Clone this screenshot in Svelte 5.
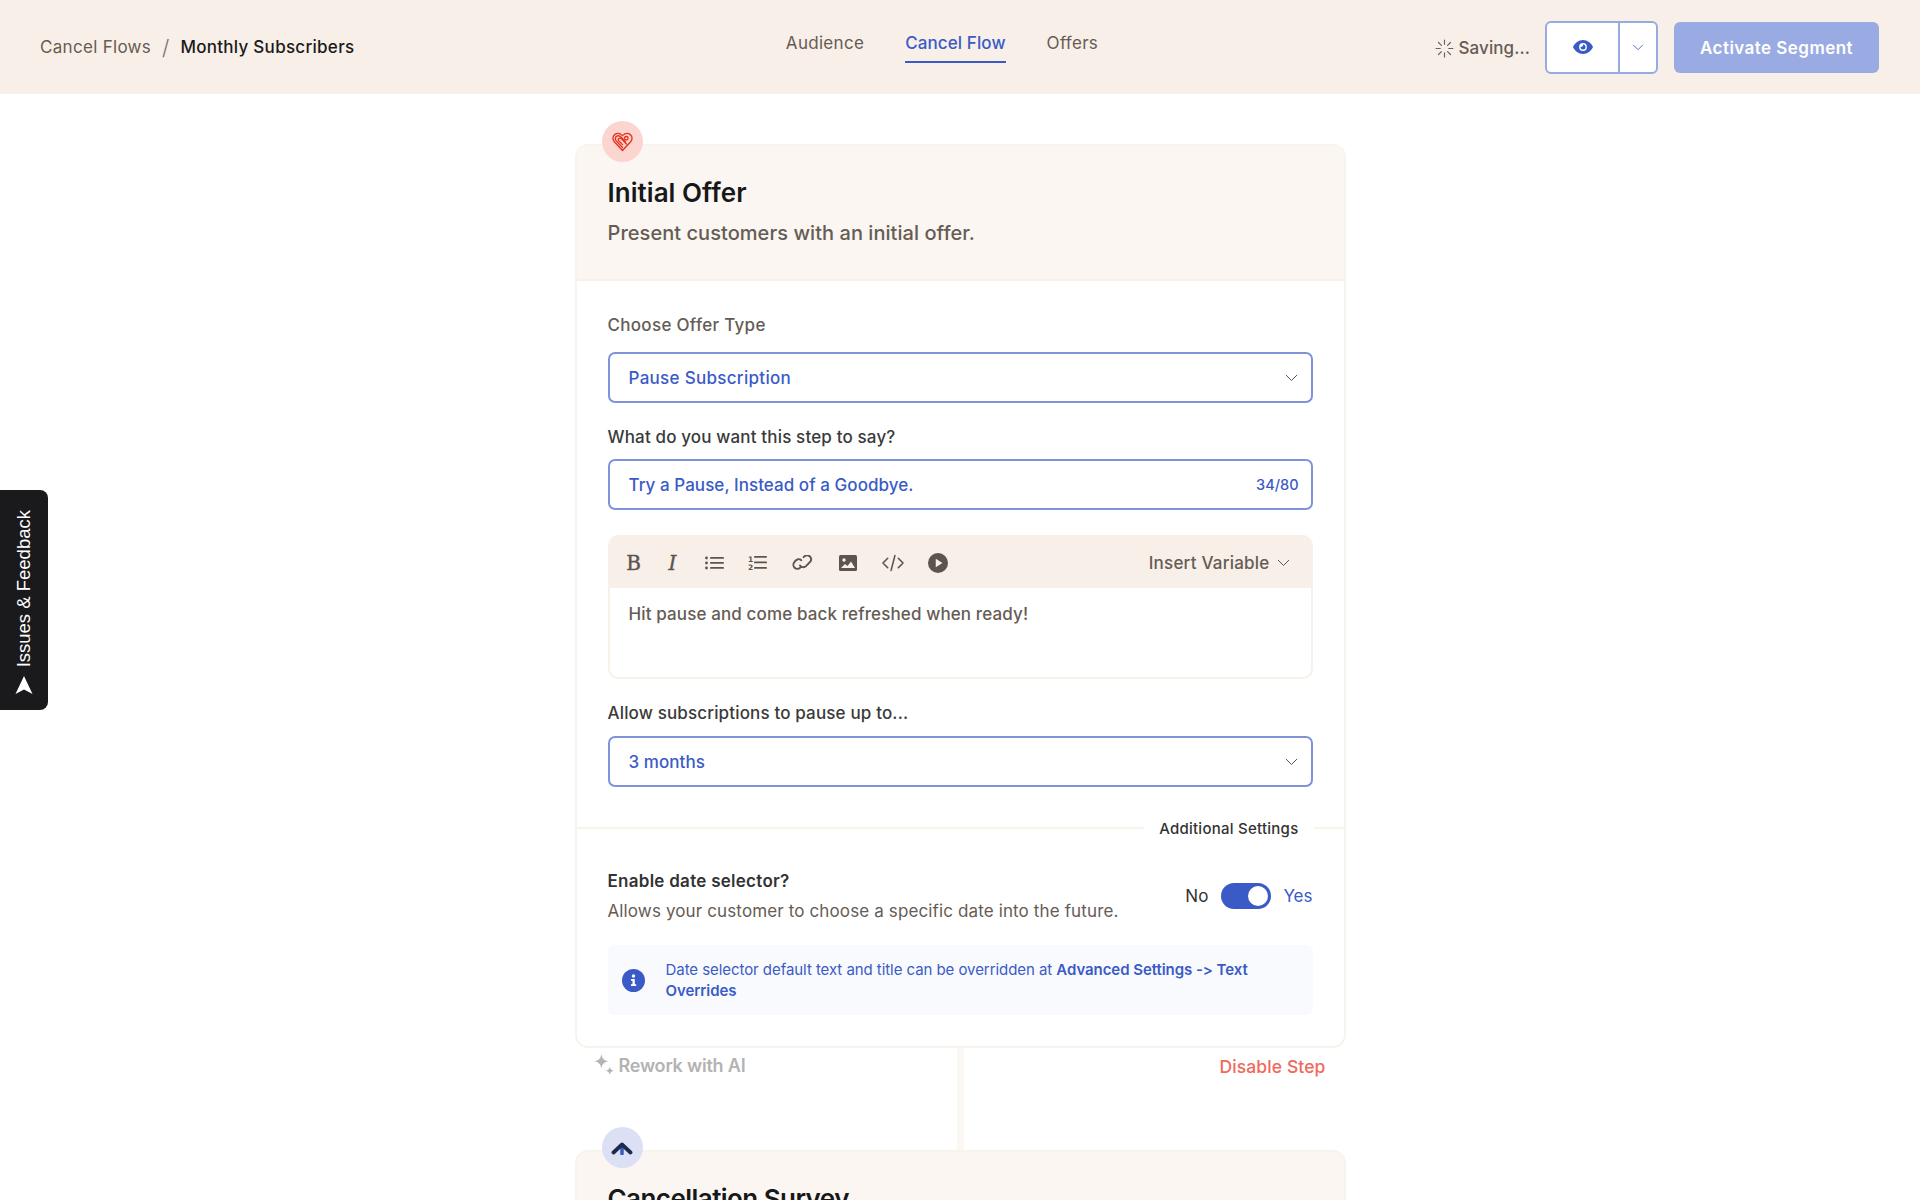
<script>
  const chev = 'M1 1l5.500 5.500L12 1';
</script>

<div class="page">
  <header class="topbar">
    <nav class="crumbs">
      <span class="crumb-muted">Cancel Flows</span>
      <span class="slash">/</span>
      <span class="crumb-current">Monthly Subscribers</span>
    </nav>
    <nav class="tabs">
      <span class="tab">Audience</span>
      <span class="tab active">Cancel Flow</span>
      <span class="tab">Offers</span>
    </nav>
    <div class="actions">
      <span class="saving">
        <svg width="19" height="19" viewBox="0 0 18 18" fill="none" stroke="#6b625b" stroke-width="1.100" stroke-linecap="round">
          <path d="M9 1v4M9 13v4M1 9h4M13 9h4M3.300 3.300l2.800 2.800M11.900 11.900l2.800 2.800M3.300 14.700l2.800-2.800M11.900 6.100l2.800-2.800"/>
        </svg>
        Saving...
      </span>
      <div class="preview">
        <span class="eye">
          <svg width="20" height="14" viewBox="0 0 20 14">
            <path fill="#3a5bc7" d="M10 0C5.500 0 1.900 3 0 7c1.900 4 5.500 7 10 7s8.100-3 10-7c-1.900-4-5.500-7-10-7z"/>
            <circle cx="10" cy="7" r="3.900" fill="#fff"/>
            <path fill="#3a5bc7" d="M10 4.500a2.500 2.500 0 1 1-2.500 2.500c1.300.4 2.900-.9 2.500-2.500z"/>
          </svg>
        </span>
        <span class="drop">
          <svg width="12" height="7" viewBox="0 0 13 8" fill="none" stroke="#3a5bc7" stroke-width="1"><path d={chev}/></svg>
        </span>
      </div>
      <span class="activate">Activate Segment</span>
    </div>
  </header>

  <aside class="feedback">
    <span class="fb-text">Issues &amp; Feedback</span>
    <svg class="fb-icon" width="18" height="18" viewBox="0 0 17 18"><path fill="#fff" d="M8.500 0L17 18l-8.500-4.500L0 18z"/></svg>
  </aside>

  <main class="flow">
    <section class="card">
      <span class="badge badge-red">
        <svg width="21" height="21" viewBox="0 0 20 20" fill="none" stroke="#e8321f" stroke-width="1.300" stroke-linejoin="round" stroke-linecap="round">
          <path d="M10 18.500L2.200 10.200C.2 8 .6 4.700 2.800 3.200 5 1.800 7.700 2.200 10 4.400c2.300-2.200 5-2.600 7.200-1.200 2.200 1.500 2.600 4.800.6 7z"/>
          <path d="M10 15.800L4 9.400C2.700 8 3 5.800 4.500 4.900c1.500-.9 3-.3 4.300 1l4 4.200"/>
          <path d="M10 13l-3.600-3.800C5.500 8.200 6 7 7 6.700c.9-.3 1.500.3 2.200 1l4.600 4.700"/>
          <circle cx="13.600" cy="6.900" r="1.700"/>
        </svg>
      </span>
      <div class="card-head">
        <h2>Initial Offer</h2>
        <p>Present customers with an initial offer.</p>
      </div>
      <div class="card-body">
        <div class="label first">Choose Offer Type</div>
        <div class="field">
          <span class="sp-a">Pause Subscription</span>
          <svg width="13" height="8" viewBox="0 0 13 8" fill="none" stroke="#5c544e" stroke-width="1"><path d={chev}/></svg>
        </div>
        <div class="label dark">What do you want this step to say?</div>
        <div class="field">
          <span>Try a Pause, Instead of a Goodbye.</span>
          <span class="count">34/80</span>
        </div>
        <div class="editor">
          <div class="toolbar">
            <div class="tools">
              <span class="bold-i">B</span>
              <span class="ital-i">I</span>
              <svg width="19" height="14" viewBox="0 0 19 14" fill="#5c544e"><circle cx="1.500" cy="2" r="1.400"/><circle cx="1.500" cy="7" r="1.400"/><circle cx="1.500" cy="12" r="1.400"/><rect x="5" y="1" width="14" height="1.800" rx=".9"/><rect x="5" y="6" width="14" height="1.800" rx=".9"/><rect x="5" y="11" width="14" height="1.800" rx=".9"/></svg>
              <svg width="19" height="15" viewBox="0 0 19 15"><text x="0" y="6.500" class="num">1</text><text x="0" y="14.500" class="num">2</text><g fill="#5c544e"><rect x="6" y="1" width="13" height="1.800" rx=".9"/><rect x="6" y="6.500" width="13" height="1.800" rx=".9"/><rect x="6" y="12" width="13" height="1.800" rx=".9"/></g></svg>
              <svg width="22" height="16" viewBox="0 0 22 16" fill="none" stroke="#5c544e" stroke-width="1.900" stroke-linecap="round"><path d="M9.300 5.200A4 4 0 0 0 3.300 5.900L2.400 7.200a4 4 0 0 0 5.700 5.600l1-1"/><path d="M8 10.500a4 4 0 0 0 6 .6l4.300-4.400a4 4 0 0 0-5.700-5.500l-1 1"/></svg>
              <svg width="18" height="16" viewBox="0 0 18 16"><rect width="18" height="16" rx="1.500" fill="#5c544e"/><circle cx="5" cy="5" r="1.700" fill="#f8efe8"/><path fill="#f8efe8" d="M2 13l4-4 2.500 2 3.500-4.500 4 6.500z"/></svg>
              <svg width="24" height="18" viewBox="0 0 22 17" fill="none" stroke="#5c544e" stroke-width="1.500" stroke-linecap="round" stroke-linejoin="round"><path d="M6 4L1.500 8.500 6 13M16 4l4.500 4.500L16 13M12.800 1.500L9.200 15.500"/></svg>
              <svg width="20" height="20" viewBox="0 0 18 18"><circle cx="9" cy="9" r="9" fill="#5c544e"/><path d="M7 5.200v7.600L13 9z" fill="#f8efe8"/></svg>
            </div>
            <div class="insert">
              Insert Variable
              <svg width="13" height="8" viewBox="0 0 13 8" fill="none" stroke="#5c544e" stroke-width="1"><path d={chev}/></svg>
            </div>
          </div>
          <div class="editor-body">Hit pause and come back refreshed when ready!</div>
        </div>
        <div class="label dark after-editor">Allow subscriptions to pause up to...</div>
        <div class="field">
          <span>3 months</span>
          <svg width="13" height="8" viewBox="0 0 13 8" fill="none" stroke="#5c544e" stroke-width="1"><path d={chev}/></svg>
        </div>
      </div>
      <div class="divider"><span>Additional Settings</span></div>
      <div class="settings">
        <div class="setting-row">
          <div>
            <div class="setting-title">Enable date selector?</div>
            <div class="setting-desc">Allows your customer to choose a specific date into the future.</div>
          </div>
          <div class="toggle-wrap">
            <span class="no">No</span>
            <span class="toggle"><span class="knob"></span></span>
            <span class="yes">Yes</span>
          </div>
        </div>
        <div class="info">
          <svg width="23" height="23" viewBox="0 0 23 23"><circle cx="11.500" cy="11.500" r="11.500" fill="#3a5bc7"/><circle cx="11.500" cy="7" r="1.700" fill="#fff"/><path fill="#fff" d="M9 10h3.800v5.300H14.200V17H9v-1.700h1.500v-3.600H9z"/></svg>
          <p>Date selector default text and title can be overridden at <b>Advanced Settings -&gt; Text Overrides</b></p>
        </div>
      </div>
    </section>

    <div class="between">
      <span class="rework">
        <svg width="22" height="22" viewBox="0 0 21 21" fill="#b5b5b5"><path d="M8 0c.7 4.400 2.600 6.300 7 7-4.400.7-6.300 2.600-7 7-.7-4.400-2.600-6.300-7-7 4.400-.7 6.300-2.600 7-7z"/><path d="M16 12c.4 2.400 1.600 3.600 4 4-2.400.4-3.600 1.600-4 4-.4-2.400-1.600-3.600-4-4 2.400-.4 3.600-1.600 4-4z"/></svg>
        Rework with AI
      </span>
      <span class="disable">Disable Step</span>
    </div>

    <section class="card second">
      <span class="badge badge-blue">
        <svg width="22" height="14" viewBox="0 0 22 14" fill="none"><path d="M11 7v6" stroke="#3a5bc7" stroke-width="3.500" stroke-linecap="round"/><path d="M2.500 11.500L11 3.500l8.500 8" stroke="#1e2a4a" stroke-width="3.800" stroke-linecap="round" stroke-linejoin="round"/></svg>
      </span>
      <div class="card-head">
        <h2 class="survey">Cancellation Survey</h2>
      </div>
    </section>
  </main>
</div>

<style>
  :global(body) {
    margin: 0;
    background: #fff;
    overflow: hidden;
    font-family: Inter, "Liberation Sans", sans-serif;
    color: #1a1a1a;
  }
  .page { height: 1200px; overflow: hidden; position: relative; }

  .topbar {
    height: 94px;
    background: #f8efe8;
    display: grid;
    grid-template-columns: 1fr auto 1fr;
    align-items: center;
    padding: 0 41px 0 40px;
  }
  .crumbs { display: flex; align-items: center; font-size: 17px; }
  .crumb-muted { color: #655c55; letter-spacing: 0.3px; }
  .slash { color: #75706a; margin: 0 11px; font-size: 21px; font-weight: 300; }
  .crumb-current { color: #1a1a1a; font-weight: 500; letter-spacing: 0.28px; }

  .tabs { display: flex; gap: 41px; margin: -4px 35px 0 0; font-size: 17px; letter-spacing: 0.3px; color: #655c55; }
  .tab { padding: 6px 0 8px; border-bottom: 2px solid transparent; }
  .tab.active { color: #3a5bc7; font-weight: 500; border-bottom-color: #3a5bc7; letter-spacing: 0.1px; }

  .actions { display: flex; align-items: center; justify-content: flex-end; }
  .saving { display: flex; align-items: center; gap: 4px; font-size: 17px; color: #655c55; font-weight: 500; letter-spacing: 0.1px; margin-right: 15px; padding-top: 2px; }
  .preview { display: flex; height: 53px; width: 113px; box-sizing: border-box; background: #fff; border: 2px solid #98a9e4; border-radius: 6px; margin-right: 16px; }
  .eye { flex: 1; display: flex; align-items: center; justify-content: center; border-right: 2px solid #98a9e4; }
  .drop { width: 36px; display: flex; align-items: center; justify-content: center; }
  .activate { width: 205px; height: 51px; padding-top: 2px; box-sizing: border-box; background: #9aabe3; border-radius: 6px; color: #fff; font-size: 17px; font-weight: 600; letter-spacing: 0.45px; display: flex; align-items: center; justify-content: center; }

  .feedback {
    position: absolute;
    left: 0;
    top: 490px;
    width: 48px;
    height: 220px;
    background: #1a1a1c;
    border-radius: 0 8px 8px 0;
    display: flex;
    flex-direction: column;
    align-items: center;
    justify-content: flex-end;
    padding-bottom: 16px;
    box-sizing: border-box;
    gap: 9px;
  }
  .fb-text { writing-mode: vertical-rl; transform: rotate(180deg); color: #fff; font-family: "Liberation Sans", sans-serif; font-size: 18.500px; }

  .flow {
    width: 771px;
    margin: 0 auto;
    padding-top: 50px;
    position: relative;
  }
  .flow::before {
    content: "";
    position: absolute;
    left: 382px;
    top: 900px;
    width: 7px;
    height: 210px;
    background: #fbf8f4;
  }

  .card {
    position: relative;
    background: #fff;
    border: 2px solid #f8f3ec;
    border-radius: 13px;
    box-sizing: border-box;
  }
  .second { background: #fbf6f1; }
  .badge {
    position: absolute;
    left: 25px;
    top: -25px;
    width: 41px;
    height: 41px;
    border-radius: 50%;
    display: flex;
    align-items: center;
    justify-content: center;
  }
  .badge-red { background: #fdd5d0; }
  .badge-blue { background: #dbe0f4; }

  .card-head {
    background: #fbf6f1;
    border-bottom: 2px solid #f8f1e9;
    border-radius: 11px 11px 0 0;
    height: 135px;
    padding: 30px 31px 0;
    box-sizing: border-box;
  }
  h2 { margin: 0; font-size: 26px; line-height: 34px; font-weight: 600; letter-spacing: 0.05px; color: #17181a; }
  h2.survey { letter-spacing: -0.55px; }
  p { margin: 0; }
  .card-head p { margin-top: 8px; font-size: 20px; line-height: 30px; color: #655c55; font-weight: 500; letter-spacing: 0.05px; }

  .card-body { padding: 0 31px; }
  .label { font-size: 17px; line-height: 24px; font-weight: 500; color: #655c55; letter-spacing: 0.15px; }
  .label.first { margin-top: 32px; margin-bottom: 15px; letter-spacing: 0.3px; }
  .label.dark { color: #3a3a3a; margin-top: 22px; margin-bottom: 10px; }
  .label.after-editor { margin-top: 22px; margin-bottom: 11px; }

  .field {
    height: 51px;
    box-sizing: border-box;
    border: 2px solid #7f93dc;
    border-radius: 7px;
    display: flex;
    align-items: center;
    justify-content: space-between;
    padding: 0 13px 0 19px;
    color: #3a5bc7;
    font-size: 17px;
    font-weight: 500;
    letter-spacing: 0.05px;
  }
  .sp-a { letter-spacing: 0.3px; }
  .count { font-size: 14.500px; letter-spacing: 0; margin-right: -1px; }

  .editor { margin-top: 25px; border: 2px solid #f8f1e9; border-top: 0; border-radius: 10px; overflow: hidden; }
  .toolbar {
    height: 53px;
    margin: 0 -2px;
    background: #f8efe8;
    display: flex;
    align-items: center;
    justify-content: space-between;
    padding: 2px 23px 0 19px;
    box-sizing: border-box;
  }
  .tools { display: grid; grid-template-columns: 14px 16px 20px 18px 24px 18px 24px 18px; column-gap: 24px; justify-items: center; align-items: center; }
  .bold-i { font-family: "DejaVu Serif", serif; color: #5c544e; font-size: 20px; -webkit-text-stroke: .4px #5c544e; }
  .ital-i { font-family: "DejaVu Serif", serif; font-style: italic; color: #5c544e; font-size: 20px; -webkit-text-stroke: .4px #5c544e; }
  .num { font-family: "DejaVu Sans", sans-serif; font-weight: 700; font-size: 7.500px; fill: #5c544e; }
  .insert { display: flex; align-items: center; gap: 7px; color: #655c55; font-size: 17px; font-weight: 500; letter-spacing: 0.22px; }
  .editor-body { height: 89px; padding: 14px 19px; box-sizing: border-box; font-size: 17px; line-height: 24px; color: #655c55; font-weight: 500; letter-spacing: 0.12px; }

  .divider { position: relative; margin-top: 30px; height: 22px; display: flex; align-items: center; justify-content: flex-end; padding-right: 30px; }
  .divider::before { content: ""; position: absolute; left: 0; right: 0; top: 10px; height: 2px; background: #f8f4e8; }
  .divider span { position: relative; background: #fff; padding: 0 15px; font-size: 15px; font-weight: 500; color: #333; letter-spacing: 0.25px; }

  .settings { padding: 0 31px 31px; }
  .setting-row { display: flex; justify-content: space-between; align-items: center; margin-top: 30px; }
  .setting-title { font-size: 17px; line-height: 24px; font-weight: 600; color: #333; letter-spacing: 0.27px; }
  .setting-desc { margin-top: 6px; font-size: 17px; line-height: 24px; color: #655c55; font-weight: 400; letter-spacing: 0.13px; }
  .toggle-wrap { display: flex; align-items: center; gap: 12px; font-size: 17px; }
  .no { color: #333; margin-right: 1px; }
  .yes { color: #3a5bc7; }
  .toggle { width: 50px; height: 26px; border-radius: 13px; background: #3a5bc7; position: relative; }
  .knob { position: absolute; right: 3px; top: 3px; width: 20px; height: 20px; border-radius: 50%; background: #fff; }

  .info {
    margin-top: 22px;
    height: 70px;
    box-sizing: border-box;
    background: #f9fafd;
    border-radius: 6px;
    display: flex;
    align-items: center;
    gap: 21px;
    padding: 0 40px 0 14px;
  }
  .info svg { flex: none; }
  .info p { font-size: 15px; line-height: 21px; color: #3a5bc7; letter-spacing: -0.06px; }
  .info b { font-weight: 600; }

  .between { height: 102px; display: flex; justify-content: space-between; align-items: flex-start; padding: 6px 20px 0 18px; box-sizing: border-box; }
  .rework { display: flex; align-items: center; gap: 4px; font-size: 18px; font-weight: 600; color: #b3b3b3; letter-spacing: -0.2px; }
  .disable { margin-top: 2px; font-size: 17.500px; font-weight: 500; color: #f0695c; letter-spacing: 0.1px; }
</style>
